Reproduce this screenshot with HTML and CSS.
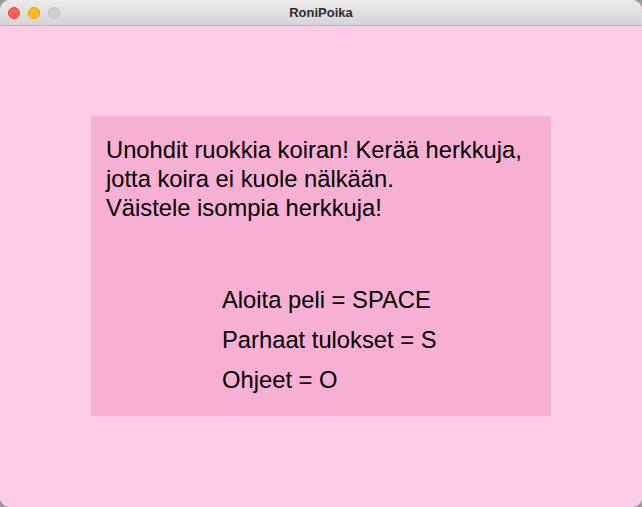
FILE: index.html
```html
<!DOCTYPE html>
<html>
<head>
<meta charset="utf-8">
<link rel="stylesheet" href="styles.css">
</head>
<body>
<div class="window">
  <div class="titlebar">
    <div class="lights">
      <span class="light red"></span>
      <span class="light yellow"></span>
      <span class="light gray"></span>
    </div>
    <div class="title">RoniPoika</div>
  </div>
  <div class="content">
    <div class="panel">
      <div class="intro">
        <div class="line">Unohdit ruokkia koiran! Kerää herkkuja,</div>
        <div class="line">jotta koira ei kuole nälkään.</div>
        <div class="line">Väistele isompia herkkuja!</div>
      </div>
      <div class="menu">
        <div class="item">Aloita peli = SPACE</div>
        <div class="item">Parhaat tulokset = S</div>
        <div class="item">Ohjeet = O</div>
      </div>
    </div>
  </div>
</div>
</body>
</html>
```

FILE: styles.css
```css
html, body {
  margin: 0;
  padding: 0;
  width: 642px;
  height: 507px;
  background: #9a9a9a;
  overflow: hidden;
}
.window {
  width: 642px;
  height: 507px;
  border-radius: 10px;
  overflow: hidden;
  display: flex;
  flex-direction: column;
  background: #ffcce6;
}
.titlebar {
  height: 25px;
  flex: none;
  background: linear-gradient(#ebebeb, #d5d5d5);
  border-bottom: 1px solid #b9b9b9;
  display: flex;
  align-items: center;
  position: relative;
}
.lights {
  display: flex;
  gap: 8px;
  padding-left: 8px;
}
.light {
  width: 12px;
  height: 12px;
  border-radius: 50%;
  box-sizing: border-box;
}
.red { background: #fe5f57; border: 1px solid #e0443e; }
.yellow { background: #fdbc1a; border: 1px solid #dea123; }
.gray { background: #d0d0d0; border: 1px solid #bcbcbc; }
.title {
  position: absolute;
  left: 0;
  right: 0;
  text-align: center;
  font-family: "Liberation Sans", Arial, sans-serif;
  font-weight: bold;
  font-size: 13px;
  color: #2b2b2b;
}
.content {
  flex: 1;
  padding: 90px 0 0 91px;
  background: #ffcce6;
}
.panel {
  width: 460px;
  height: 300px;
  box-sizing: border-box;
  background: #f7afd4;
  padding: 19px 0 0 15px;
  font-family: "Liberation Sans", Arial, sans-serif;
  font-size: 23.75px;
  color: #000;
  display: flex;
  flex-direction: column;
}
.intro .line {
  line-height: 29px;
  height: 29px;
  white-space: nowrap;
}
.menu {
  margin-top: 58px;
  padding-left: 116px;
}
.menu .item {
  line-height: 40px;
  height: 40px;
  white-space: nowrap;
}
```
